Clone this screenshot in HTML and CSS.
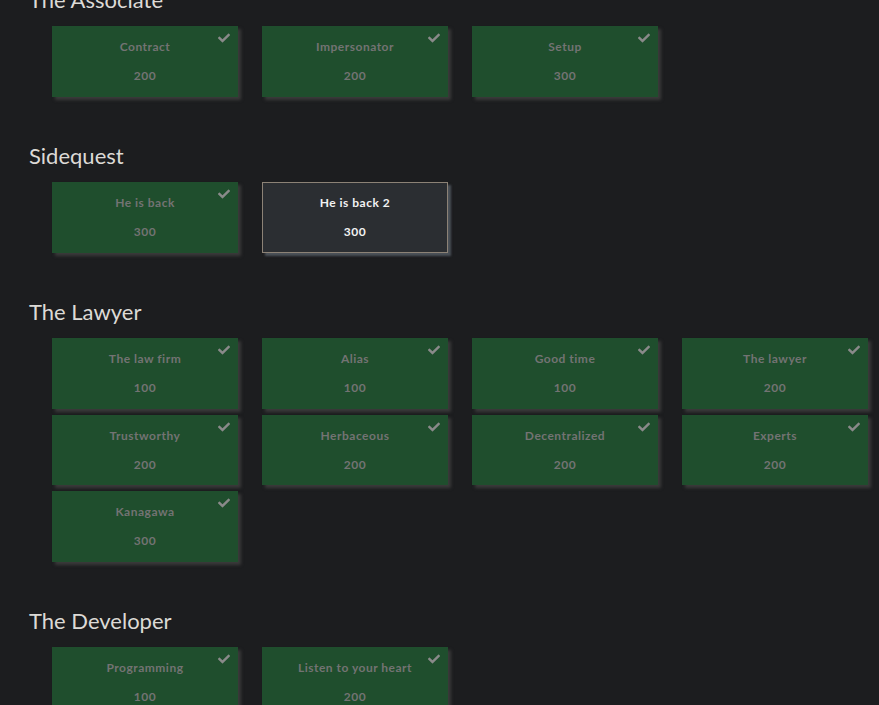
FILE: index.html
```html
<!DOCTYPE html>
<html>
<head>
<meta charset="utf-8">
<link rel="stylesheet" href="styles.css">
</head>
<body>
<main class="board">
  <section class="category first">
    <h3 class="cat-title">The Associate</h3>
    <div class="grid">
      <button class="chal solved"><span class="name">Contract</span><span class="pts">200</span><svg class="tick" viewBox="0 0 512 512"><path d="M173.898 439.404l-166.4-166.4c-9.997-9.997-9.997-26.206 0-36.204l36.203-36.204c9.997-9.998 26.207-9.998 36.204 0L192 312.69 432.095 72.596c9.997-9.997 26.207-9.997 36.204 0l36.203 36.204c9.997 9.997 9.997 26.206 0 36.204l-294.4 294.401c-9.998 9.997-26.207 9.997-36.204-.001z"/></svg></button>
      <button class="chal solved"><span class="name">Impersonator</span><span class="pts">200</span><svg class="tick" viewBox="0 0 512 512"><path d="M173.898 439.404l-166.4-166.4c-9.997-9.997-9.997-26.206 0-36.204l36.203-36.204c9.997-9.998 26.207-9.998 36.204 0L192 312.69 432.095 72.596c9.997-9.997 26.207-9.997 36.204 0l36.203 36.204c9.997 9.997 9.997 26.206 0 36.204l-294.4 294.401c-9.998 9.997-26.207 9.997-36.204-.001z"/></svg></button>
      <button class="chal solved"><span class="name">Setup</span><span class="pts">300</span><svg class="tick" viewBox="0 0 512 512"><path d="M173.898 439.404l-166.4-166.4c-9.997-9.997-9.997-26.206 0-36.204l36.203-36.204c9.997-9.998 26.207-9.998 36.204 0L192 312.69 432.095 72.596c9.997-9.997 26.207-9.997 36.204 0l36.203 36.204c9.997 9.997 9.997 26.206 0 36.204l-294.4 294.401c-9.998 9.997-26.207 9.997-36.204-.001z"/></svg></button>
    </div>
  </section>
  <section class="category">
    <h3 class="cat-title">Sidequest</h3>
    <div class="grid">
      <button class="chal solved"><span class="name">He is back</span><span class="pts">300</span><svg class="tick" viewBox="0 0 512 512"><path d="M173.898 439.404l-166.4-166.4c-9.997-9.997-9.997-26.206 0-36.204l36.203-36.204c9.997-9.998 26.207-9.998 36.204 0L192 312.69 432.095 72.596c9.997-9.997 26.207-9.997 36.204 0l36.203 36.204c9.997 9.997 9.997 26.206 0 36.204l-294.4 294.401c-9.998 9.997-26.207 9.997-36.204-.001z"/></svg></button>
      <button class="chal open"><span class="name">He is back 2</span><span class="pts">300</span></button>
    </div>
  </section>
  <section class="category">
    <h3 class="cat-title">The Lawyer</h3>
    <div class="grid">
      <button class="chal solved"><span class="name">The law firm</span><span class="pts">100</span><svg class="tick" viewBox="0 0 512 512"><path d="M173.898 439.404l-166.4-166.4c-9.997-9.997-9.997-26.206 0-36.204l36.203-36.204c9.997-9.998 26.207-9.998 36.204 0L192 312.69 432.095 72.596c9.997-9.997 26.207-9.997 36.204 0l36.203 36.204c9.997 9.997 9.997 26.206 0 36.204l-294.4 294.401c-9.998 9.997-26.207 9.997-36.204-.001z"/></svg></button>
      <button class="chal solved"><span class="name">Alias</span><span class="pts">100</span><svg class="tick" viewBox="0 0 512 512"><path d="M173.898 439.404l-166.4-166.4c-9.997-9.997-9.997-26.206 0-36.204l36.203-36.204c9.997-9.998 26.207-9.998 36.204 0L192 312.69 432.095 72.596c9.997-9.997 26.207-9.997 36.204 0l36.203 36.204c9.997 9.997 9.997 26.206 0 36.204l-294.4 294.401c-9.998 9.997-26.207 9.997-36.204-.001z"/></svg></button>
      <button class="chal solved"><span class="name">Good time</span><span class="pts">100</span><svg class="tick" viewBox="0 0 512 512"><path d="M173.898 439.404l-166.4-166.4c-9.997-9.997-9.997-26.206 0-36.204l36.203-36.204c9.997-9.998 26.207-9.998 36.204 0L192 312.69 432.095 72.596c9.997-9.997 26.207-9.997 36.204 0l36.203 36.204c9.997 9.997 9.997 26.206 0 36.204l-294.4 294.401c-9.998 9.997-26.207 9.997-36.204-.001z"/></svg></button>
      <button class="chal solved"><span class="name">The lawyer</span><span class="pts">200</span><svg class="tick" viewBox="0 0 512 512"><path d="M173.898 439.404l-166.4-166.4c-9.997-9.997-9.997-26.206 0-36.204l36.203-36.204c9.997-9.998 26.207-9.998 36.204 0L192 312.69 432.095 72.596c9.997-9.997 26.207-9.997 36.204 0l36.203 36.204c9.997 9.997 9.997 26.206 0 36.204l-294.4 294.401c-9.998 9.997-26.207 9.997-36.204-.001z"/></svg></button>
      <button class="chal solved"><span class="name">Trustworthy</span><span class="pts">200</span><svg class="tick" viewBox="0 0 512 512"><path d="M173.898 439.404l-166.4-166.4c-9.997-9.997-9.997-26.206 0-36.204l36.203-36.204c9.997-9.998 26.207-9.998 36.204 0L192 312.69 432.095 72.596c9.997-9.997 26.207-9.997 36.204 0l36.203 36.204c9.997 9.997 9.997 26.206 0 36.204l-294.4 294.401c-9.998 9.997-26.207 9.997-36.204-.001z"/></svg></button>
      <button class="chal solved"><span class="name">Herbaceous</span><span class="pts">200</span><svg class="tick" viewBox="0 0 512 512"><path d="M173.898 439.404l-166.4-166.4c-9.997-9.997-9.997-26.206 0-36.204l36.203-36.204c9.997-9.998 26.207-9.998 36.204 0L192 312.69 432.095 72.596c9.997-9.997 26.207-9.997 36.204 0l36.203 36.204c9.997 9.997 9.997 26.206 0 36.204l-294.4 294.401c-9.998 9.997-26.207 9.997-36.204-.001z"/></svg></button>
      <button class="chal solved"><span class="name">Decentralized</span><span class="pts">200</span><svg class="tick" viewBox="0 0 512 512"><path d="M173.898 439.404l-166.4-166.4c-9.997-9.997-9.997-26.206 0-36.204l36.203-36.204c9.997-9.998 26.207-9.998 36.204 0L192 312.69 432.095 72.596c9.997-9.997 26.207-9.997 36.204 0l36.203 36.204c9.997 9.997 9.997 26.206 0 36.204l-294.4 294.401c-9.998 9.997-26.207 9.997-36.204-.001z"/></svg></button>
      <button class="chal solved"><span class="name">Experts</span><span class="pts">200</span><svg class="tick" viewBox="0 0 512 512"><path d="M173.898 439.404l-166.4-166.4c-9.997-9.997-9.997-26.206 0-36.204l36.203-36.204c9.997-9.998 26.207-9.998 36.204 0L192 312.69 432.095 72.596c9.997-9.997 26.207-9.997 36.204 0l36.203 36.204c9.997 9.997 9.997 26.206 0 36.204l-294.4 294.401c-9.998 9.997-26.207 9.997-36.204-.001z"/></svg></button>
      <button class="chal solved"><span class="name">Kanagawa</span><span class="pts">300</span><svg class="tick" viewBox="0 0 512 512"><path d="M173.898 439.404l-166.4-166.4c-9.997-9.997-9.997-26.206 0-36.204l36.203-36.204c9.997-9.998 26.207-9.998 36.204 0L192 312.69 432.095 72.596c9.997-9.997 26.207-9.997 36.204 0l36.203 36.204c9.997 9.997 9.997 26.206 0 36.204l-294.4 294.401c-9.998 9.997-26.207 9.997-36.204-.001z"/></svg></button>
    </div>
  </section>
  <section class="category">
    <h3 class="cat-title">The Developer</h3>
    <div class="grid">
      <button class="chal solved"><span class="name">Programming</span><span class="pts">100</span><svg class="tick" viewBox="0 0 512 512"><path d="M173.898 439.404l-166.4-166.4c-9.997-9.997-9.997-26.206 0-36.204l36.203-36.204c9.997-9.998 26.207-9.998 36.204 0L192 312.69 432.095 72.596c9.997-9.997 26.207-9.997 36.204 0l36.203 36.204c9.997 9.997 9.997 26.206 0 36.204l-294.4 294.401c-9.998 9.997-26.207 9.997-36.204-.001z"/></svg></button>
      <button class="chal solved"><span class="name">Listen to your heart</span><span class="pts">200</span><svg class="tick" viewBox="0 0 512 512"><path d="M173.898 439.404l-166.4-166.4c-9.997-9.997-9.997-26.206 0-36.204l36.203-36.204c9.997-9.998 26.207-9.998 36.204 0L192 312.69 432.095 72.596c9.997-9.997 26.207-9.997 36.204 0l36.203 36.204c9.997 9.997 9.997 26.206 0 36.204l-294.4 294.401c-9.998 9.997-26.207 9.997-36.204-.001z"/></svg></button>
    </div>
  </section>
</main>
</body>
</html>
```

FILE: styles.css
```css
html, body {
  margin: 0;
  padding: 0;
  background: #1c1d1f;
  overflow: hidden;
}

.board {
  padding-left: 29px;
}

.category {
  margin-bottom: 44.5px;
}

.category.first {
  margin-top: -15px;
}

.cat-title {
  margin: 0 0 13.5px 0;
  padding-top: 1.5px;
  font-family: Lato, "Open Sans", sans-serif;
  font-weight: 400;
  font-size: 22px;
  line-height: 26px;
  color: #dcdad6;
}

.grid {
  margin-left: 23px;
  display: grid;
  grid-template-columns: repeat(4, 186px);
  column-gap: 24px;
  row-gap: 6px;
}

.chal {
  position: relative;
  height: 70.5px;
  margin: 0;
  padding: 12px 4px 0;
  border: 0;
  display: flex;
  flex-direction: column;
  align-items: center;
  font-family: Lato, "Open Sans", sans-serif;
  font-weight: 700;
  font-size: 12px;
  letter-spacing: 0.5px;
  line-height: 18px;
  box-shadow: 3px 3px 3px #3a3a3a;
  cursor: pointer;
}

.chal .pts {
  margin-top: 11px;
}

.solved {
  background: #1f4e2d;
  color: #737373;
}

.open {
  background: #2b2e32;
  color: #f2f2f2;
  border: 1px solid #8c8276;
  padding-top: 11px;
  box-shadow: 3px 3px 2px #4a5057;
}

.tick {
  position: absolute;
  top: 6px;
  right: 8px;
  width: 12px;
  height: 12px;
  fill: #8a8a8a;
}
```
